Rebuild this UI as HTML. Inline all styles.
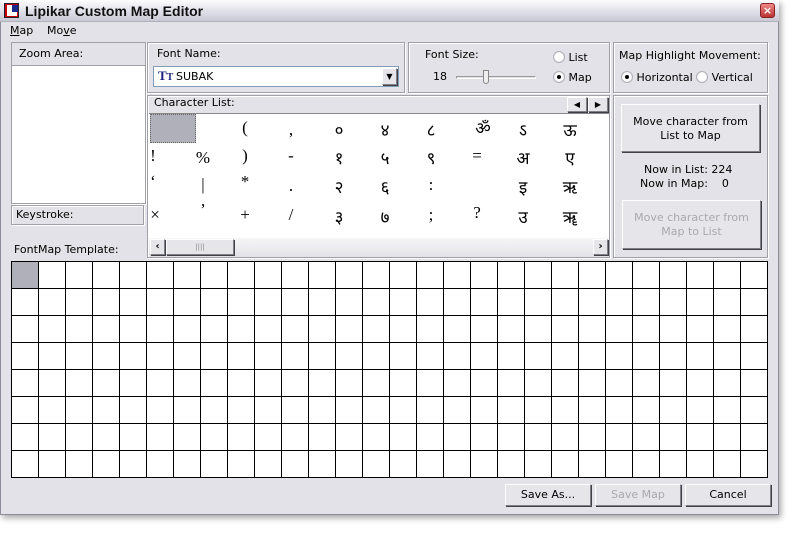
<!DOCTYPE html>
<html><head><meta charset="utf-8"><style>
*{box-sizing:border-box;margin:0;padding:0}
body{width:800px;height:536px;background:#fff;position:relative;overflow:hidden;font-family:"DejaVu Sans","Liberation Sans",sans-serif;font-size:11px;color:#000}
.a{position:absolute}
#win{left:0;top:0;width:779px;height:515px;background:#e3e2e8;border:1px solid #8c8c98;box-shadow:2px 3px 6px rgba(0,0,0,.35)}
#title{left:0;top:0;width:779px;height:22px;background:linear-gradient(#fdfdfe,#e4e4ec 45%,#c8c8d4);border-bottom:1px solid #b0b0bc}
.grp{border:1px solid #a0a0a8;box-shadow:inset 1px 1px 0 #fff,1px 1px 0 #fff}
.btn{background:#e6e6ea;border:1px solid;border-color:#fff #808088 #808088 #fff;box-shadow:1px 1px 0 #404048;text-align:center;font-size:11px}
.dis{color:#a8a8b0}
.ch{position:absolute;width:46px;text-align:center;font-size:17px;font-family:"Liberation Serif","DejaVu Sans",serif}
.rad{display:inline-block;width:12px;height:12px;border-radius:50%;background:radial-gradient(#fff 50%,#d8d8de);border:1px solid #b0b0b8;vertical-align:-2px}
.rad.on::after{content:"";display:block;width:4px;height:4px;background:#000;border-radius:50%;margin:3px}
</style></head><body>
<div id="win" class="a"></div>
<div id="title" class="a"></div>
<div class="a" style="left:4px;top:3px;width:15px;height:15px;background:#c00;border:1px solid #223"><div style="position:absolute;left:2px;top:1px;width:5px;height:11px;background:#fff"></div><div style="position:absolute;left:2px;top:8px;width:10px;height:4px;background:#fff"></div><div style="position:absolute;left:7px;top:1px;width:6px;height:7px;background:#1a2a8a"></div></div>
<div class="a" style="left:25px;top:3px;font-weight:bold;font-size:14px;color:#111;font-family:'Liberation Sans',sans-serif">Lipikar Custom Map Editor</div>
<div class="a" style="left:760px;top:3px;width:15px;height:15px;background:linear-gradient(#e88,#b33);border:1px solid #822;border-radius:3px;color:#fff;font-size:11px;font-weight:bold;text-align:center;line-height:13px">×</div>
<div class="a" style="left:10px;top:24px"><u>M</u>ap</div>
<div class="a" style="left:47px;top:24px">Mo<u>v</u>e</div>

<div class="a grp" style="left:11px;top:42px;width:135px;height:162px;background:#fff"></div>
<div class="a" style="left:12px;top:43px;width:133px;height:23px;background:#e3e2e8;border-bottom:1px solid #a0a0a8"></div>
<div class="a" style="left:19px;top:47px">Zoom Area:</div>
<div class="a grp" style="left:11px;top:205px;width:133px;height:20px"></div>
<div class="a" style="left:16px;top:208px">Keystroke:</div>
<div class="a" style="left:14px;top:243px">FontMap Template:</div>

<div class="a grp" style="left:147px;top:42px;width:258px;height:51px"></div>
<div class="a" style="left:157px;top:47px">Font Name:</div>
<div class="a" style="left:153px;top:66px;width:246px;height:21px;background:#fff;border:1px solid #7f9db9"></div>
<div class="a" style="left:158px;top:68px;font-family:'Liberation Serif',serif;font-weight:bold;color:#1a237e;font-size:13px">T<span style="font-size:10px">T</span></div>
<div class="a" style="left:176px;top:70px">SUBAK</div>
<div class="a btn" style="left:382px;top:68px;width:15px;height:17px;font-size:8px;line-height:15px">▼</div>

<div class="a grp" style="left:408px;top:42px;width:202px;height:51px"></div>
<div class="a" style="left:425px;top:48px">Font Size:</div>
<div class="a" style="left:433px;top:70px">18</div>
<div class="a" style="left:456px;top:76px;width:80px;height:3px;border:1px solid;border-color:#999 #fff #fff #999"></div>
<div class="a" style="left:483px;top:70px;width:6px;height:14px;background:#eee;border:1px solid #888;border-radius:0 0 3px 3px"></div>
<div class="a" style="left:553px;top:51px"><span class="rad"></span> List</div>
<div class="a" style="left:553px;top:71px"><span class="rad on"></span> Map</div>

<div class="a grp" style="left:613px;top:42px;width:155px;height:51px"></div>
<div class="a" style="left:619px;top:49px">Map Highlight Movement:</div>
<div class="a" style="left:621px;top:71px;white-space:nowrap"><span class="rad on"></span> Horizontal <span class="rad"></span> Vertical</div>

<div class="a grp" style="left:147px;top:95px;width:463px;height:163px"></div>
<div class="a" style="left:154px;top:96px">Character List:</div>
<div class="a btn" style="left:567px;top:97px;width:20px;height:15px;font-size:8px;line-height:13px">◀</div>
<div class="a btn" style="left:588px;top:97px;width:20px;height:15px;font-size:8px;line-height:13px">▶</div>
<div class="a" style="left:149px;top:113px;width:460px;height:143px;background:#fff;border-top:1px solid #888"></div>
<div class="a" style="left:150px;top:114px;width:46px;height:29px;background:#b0b0ba;border:1px dotted #666"></div>
<div class="a" style="left:149px;top:238px;width:460px;height:18px;background:linear-gradient(#f6f6f8,#e4e4ea)"></div>
<div class="a btn" style="left:150px;top:239px;width:15px;height:16px;font-size:10px;line-height:14px;font-weight:bold">‹</div>
<div class="a btn" style="left:166px;top:239px;width:68px;height:16px;font-size:7px;line-height:14px;color:#888">||||</div>
<div class="a btn" style="left:593px;top:239px;width:15px;height:16px;font-size:10px;line-height:14px;font-weight:bold">›</div>
<div style="font-family:'Liberation Serif','Noto Sans CJK SC',sans-serif">
<div class="ch" style="left:222px;top:118px">(</div><div class="ch" style="left:268px;top:120px">,</div><div class="ch" style="left:316px;top:118px">०</div><div class="ch" style="left:362px;top:118px">४</div><div class="ch" style="left:408px;top:118px">८</div><div class="ch" style="left:460px;top:116px">ॐ</div><div class="ch" style="left:500px;top:118px">ऽ</div><div class="ch" style="left:547px;top:118px">ऊ</div>
<div class="ch" style="left:130px;top:146px">!</div><div class="ch" style="left:180px;top:148px">%</div><div class="ch" style="left:222px;top:146px">)</div><div class="ch" style="left:268px;top:146px">-</div><div class="ch" style="left:316px;top:146px">१</div><div class="ch" style="left:362px;top:146px">५</div><div class="ch" style="left:408px;top:146px">९</div><div class="ch" style="left:454px;top:146px">=</div><div class="ch" style="left:500px;top:146px">अ</div><div class="ch" style="left:547px;top:146px">ए</div>
<div class="ch" style="left:130px;top:172px">‘</div><div class="ch" style="left:180px;top:175px">|</div><div class="ch" style="left:222px;top:172px">*</div><div class="ch" style="left:268px;top:176px">.</div><div class="ch" style="left:316px;top:175px">२</div><div class="ch" style="left:362px;top:175px">६</div><div class="ch" style="left:408px;top:175px">:</div><div class="ch" style="left:500px;top:175px">इ</div><div class="ch" style="left:547px;top:175px">ऋ</div>
<div class="ch" style="left:132px;top:205px">×</div><div class="ch" style="left:180px;top:200px">’</div><div class="ch" style="left:222px;top:205px">+</div><div class="ch" style="left:268px;top:205px">/</div><div class="ch" style="left:316px;top:205px">३</div><div class="ch" style="left:362px;top:205px">७</div><div class="ch" style="left:408px;top:205px">;</div><div class="ch" style="left:454px;top:203px">?</div><div class="ch" style="left:500px;top:205px">उ</div><div class="ch" style="left:547px;top:205px">ॠ</div>
</div>

<div class="a grp" style="left:613px;top:95px;width:155px;height:163px"></div>
<div class="a btn" style="left:621px;top:104px;width:139px;height:48px;padding-top:10px;line-height:14px">Move character from<br>List to Map</div>
<div class="a" style="left:644px;top:163px">Now in List: 224</div>
<div class="a" style="left:640px;top:177px">Now in Map:&nbsp;&nbsp;&nbsp;&nbsp;0</div>
<div class="a btn dis" style="left:622px;top:200px;width:139px;height:49px;padding-top:10px;line-height:14px">Move character from<br>Map to List</div>

<svg class="a" style="left:0;top:0" width="800" height="536">
<rect x="11" y="261" width="757" height="216" fill="#fff"/>
<rect x="11" y="261" width="27" height="27" fill="#b0b0ba"/>
<g stroke="#000" stroke-width="1" shape-rendering="crispEdges">
<path d="M11.5 261V478M38.5 261V478M65.5 261V478M92.5 261V478M119.5 261V478M146.5 261V478M173.5 261V478M200.5 261V478M227.5 261V478M254.5 261V478M281.5 261V478M308.5 261V478M335.5 261V478M362.5 261V478M389.5 261V478M416.5 261V478M443.5 261V478M470.5 261V478M497.5 261V478M524.5 261V478M551.5 261V478M578.5 261V478M605.5 261V478M632.5 261V478M659.5 261V478M686.5 261V478M713.5 261V478M740.5 261V478M767.5 261V478"/>
<path d="M11 261.5H768M11 288.5H768M11 315.5H768M11 342.5H768M11 369.5H768M11 396.5H768M11 423.5H768M11 450.5H768M11 477.5H768"/>
</g>
</svg>

<div class="a btn" style="left:505px;top:484px;width:86px;height:22px;line-height:20px">Save As...</div>
<div class="a btn dis" style="left:595px;top:484px;width:86px;height:22px;line-height:20px">Save Map</div>
<div class="a btn" style="left:685px;top:484px;width:86px;height:22px;line-height:20px">Cancel</div>
</body></html>
